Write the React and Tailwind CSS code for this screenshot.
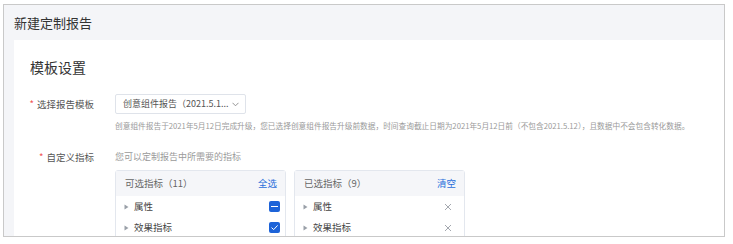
import React from "react";

const font = { fontFamily: '"Noto Sans CJK SC", "Noto Sans", sans-serif' };

function Caret() {
  return (
    <svg width="5" height="6" viewBox="0 0 5 6" className="shrink-0">
      <path d="M0.5 0.5 L4.5 3 L0.5 5.5 Z" fill="#9aa0a8" />
    </svg>
  );
}

function CloseIcon() {
  return (
    <svg width="8" height="8" viewBox="0 0 8 8">
      <path d="M1 1 L7 7 M7 1 L1 7" stroke="#9a9ea6" strokeWidth="0.9" />
    </svg>
  );
}

function Check({ kind }) {
  return (
    <span className="w-[11px] h-[11px] rounded-[2px] bg-[#1d63d8] flex items-center justify-center">
      {kind === "half" ? (
        <span className="w-[7px] h-[1.5px] bg-white" />
      ) : (
        <svg width="9" height="9" viewBox="0 0 9 9">
          <path d="M1.5 4.6 L3.7 6.6 L7.6 2.4" stroke="white" strokeWidth="1" fill="none" />
        </svg>
      )}
    </span>
  );
}

function Panel({ title, count, action, right }) {
  const rows = ["属性", "效果指标"];
  return (
    <div className="w-[171px] border border-[#e3e7ee] rounded-t-[3px] bg-white">
      <div className="h-[25px] bg-[#f5f6f9] flex items-center justify-between pl-[9px] pr-[8px] text-[9.5px]">
        <span className="text-[#666]">
          {title}（{count}）
        </span>
        <span className="text-[#2a6fdb]">{action}</span>
      </div>
      {rows.map((r, i) => (
        <div key={r} className="h-[21px] flex items-center justify-between pl-[8px] pr-[5px] text-[9.5px] text-[#444]">
          <div className="flex items-center gap-[5px]">
            <Caret />
            <span>{r}</span>
          </div>
          {right === "check" ? <Check kind={i === 0 ? "half" : "full"} /> : <span className="pr-[7px]"><CloseIcon /></span>}
        </div>
      ))}
    </div>
  );
}

export default function App() {
  return (
    <div className="w-[733px] h-[244px] bg-white pt-[4px] pl-[3px]" style={font}>
      <div className="w-[722px] h-[233px] border border-[#c9c9c9] bg-[#f4f5f8] flex flex-col overflow-hidden">
        <div className="h-[35px] shrink-0 pl-[10px] flex items-center text-[13px] text-[#333]">新建定制报告</div>
        <div className="flex-1 pl-[10px] flex">
          <div className="flex-1 bg-white pl-[16px]">
            <div className="mt-[17px] text-[14px] leading-[20px] text-[#333]">模板设置</div>

            <div className="mt-[17px] flex items-center">
              <div className="w-[64px] flex justify-end whitespace-nowrap text-[9.5px] leading-[14px] text-[#555]">
                <span className="text-[#f0504f] mr-[3px]">*</span>选择报告模板
              </div>
              <div className="ml-[21px] w-[131px] h-[20px] border border-[#dfe3ea] rounded-[2px] flex items-center pl-[7px] pr-[6px] text-[9px] text-[#555]">
                <span className="flex-1 whitespace-nowrap">创意组件报告（2021.5.1...</span>
                <svg width="7" height="5" viewBox="0 0 7 5" className="shrink-0 ml-[1px]">
                  <path d="M0.5 0.8 L3.5 3.8 L6.5 0.8" stroke="#888" strokeWidth="0.9" fill="none" />
                </svg>
              </div>
            </div>
            <div className="ml-[85px] mt-[6px] text-[7.7px] leading-[12px] text-[#9a9a9a] whitespace-nowrap">
              创意组件报告于2021年5月12日完成升级，您已选择创意组件报告升级前数据，时间查询截止日期为2021年5月12日前（不包含2021.5.12），且数据中不会包含转化数据。
            </div>

            <div className="mt-[18px] flex items-center">
              <div className="w-[64px] flex justify-end whitespace-nowrap text-[9.5px] leading-[14px] text-[#555]">
                <span className="text-[#f0504f] mr-[3px]">*</span>自定义指标
              </div>
              <div className="ml-[21px] text-[9px] leading-[14px] text-[#9a9a9a] whitespace-nowrap">您可以定制报告中所需要的指标</div>
            </div>
            <div className="ml-[85px] mt-[6px] flex gap-[8px]">
              <Panel title="可选指标" count="11" action="全选" right="check" />
              <Panel title="已选指标" count="9" action="清空" right="close" />
            </div>
          </div>
        </div>
      </div>
    </div>
  );
}
